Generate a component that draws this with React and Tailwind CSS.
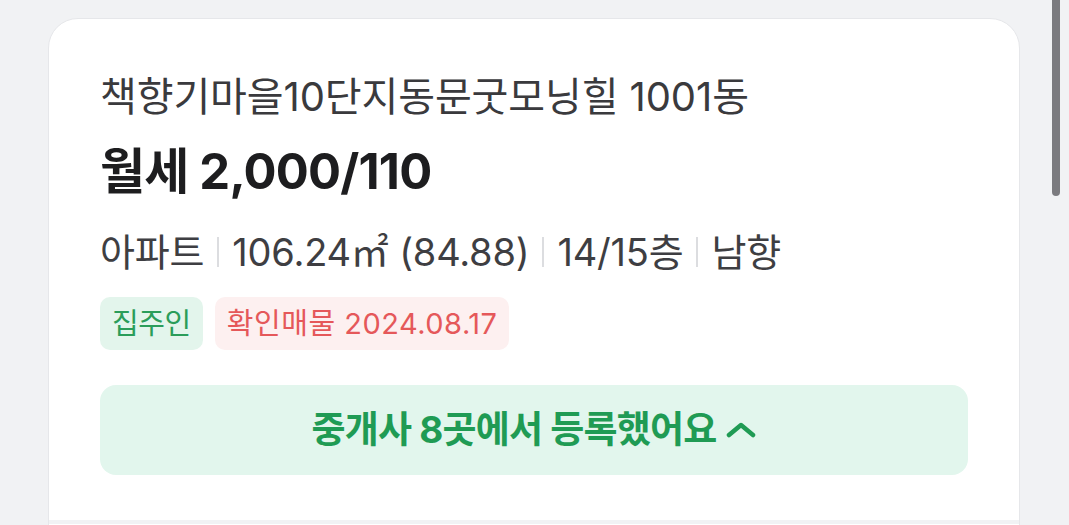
const font = { fontFamily: 'Inter, "Noto Sans CJK KR", "Noto Sans", sans-serif' }

export default function App() {
  const specs = ['아파트', '106.24㎡ (84.88)', '14/15층', '남향']

  return (
    <div style={font} className="h-[525px] overflow-hidden bg-[#f1f2f4] relative">
      {/* scrollbar thumb */}
      <div className="absolute right-[9px] top-0 w-[8px] h-[196px] rounded-b-full bg-[#7b7b7f]" />

      <div className="pl-[48px] pr-[49px] pt-[18px]">
        <div className="bg-white rounded-[30px] border border-[#e6e7ea] px-[51px] pt-[53px] h-[560px]">
          <p className="text-[40px] leading-[50px] text-[#3a3a3d] tracking-[-0.1px] whitespace-nowrap">
            책향기마을10단지동문굿모닝힐 1001동
          </p>
          <p className="mt-[20px] text-[49px] leading-[60px] font-bold text-[#1d1d1f] tracking-[-0.8px]">
            월세 2,000/110
          </p>

          <div className="mt-[25px] flex items-center text-[38px] leading-[50px] text-[#3e3e42] tracking-[-0.2px] whitespace-nowrap">
            {specs.map((s, i) => (
              <div key={s} className="flex items-center">
                {i > 0 && <span className="mx-[13px] w-[2px] h-[30px] bg-[#dcdde0]" />}
                <span>{s}</span>
              </div>
            ))}
          </div>

          <div className="mt-[20px] flex gap-[12px]">
            <span className="h-[53px] px-[12px] flex items-center rounded-[10px] bg-[#e3f5ec] text-[#2b9d5a] text-[29px] tracking-[-0.4px]">
              집주인
            </span>
            <span className="h-[53px] px-[12px] flex items-center rounded-[10px] bg-[#fdf0f0] text-[#e5585a] text-[29px] tracking-[0.5px]">
              확인매물 2024.08.17
            </span>
          </div>

          <button className="mt-[35px] w-full h-[90px] rounded-[16px] bg-[#e2f6ed] flex items-center justify-center gap-[10px] text-[#1f9b54] text-[37px] font-bold tracking-[-0.8px]">
            중개사 8곳에서 등록했어요
            <svg width="30" height="16" viewBox="0 0 30 16" fill="none">
              <polyline points="3,13 15,3 27,13" stroke="currentColor" strokeWidth="4.5" strokeLinecap="round" strokeLinejoin="round" />
            </svg>
          </button>

          <div className="mt-[45px] -mx-[51px] h-[4px] bg-[#f1f2f4]" />
        </div>
      </div>
    </div>
  )
}
